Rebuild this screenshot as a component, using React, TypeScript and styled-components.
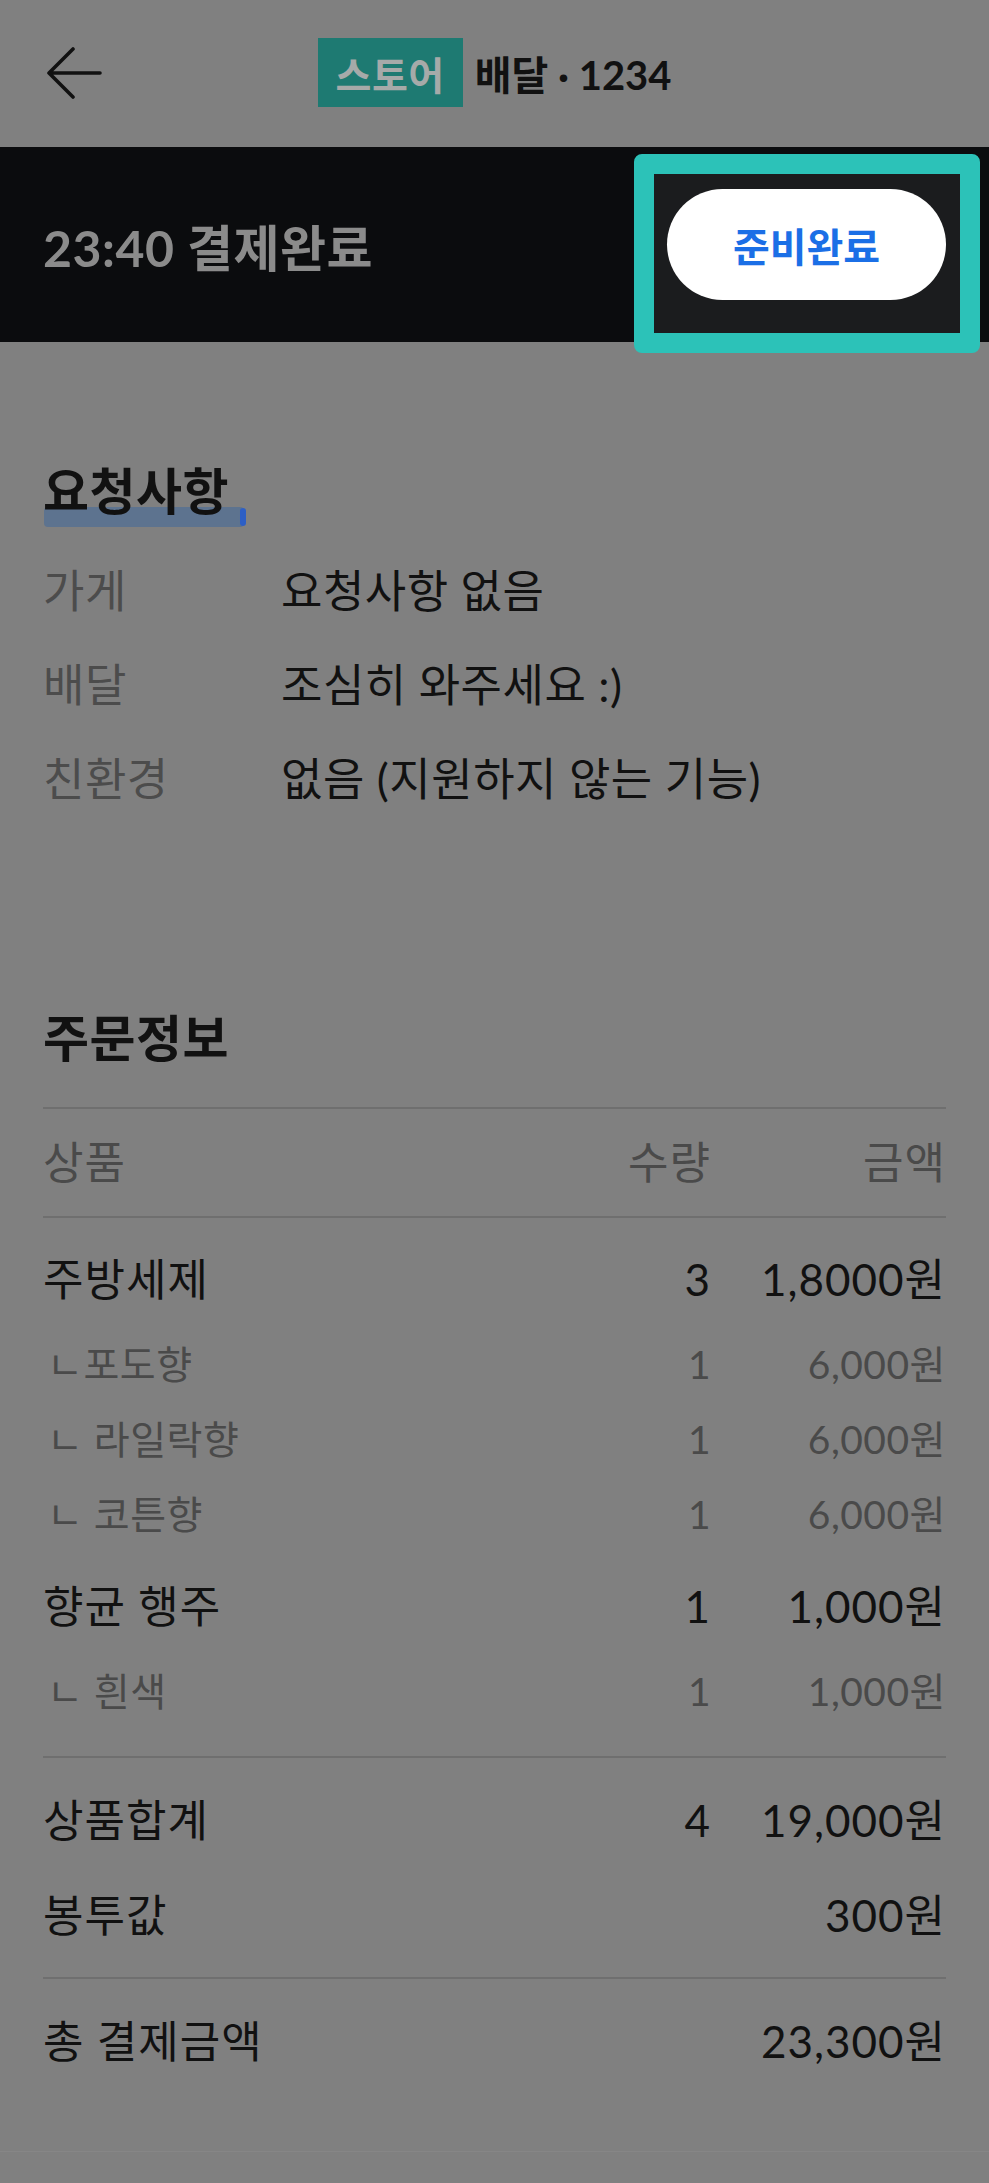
import React from 'react';
import styled, { createGlobalStyle } from 'styled-components';

const GlobalStyle = createGlobalStyle`
  html, body {
    margin: 0;
    padding: 0;
    background: #808080;
  }
  body {
    font-family: Lato, 'Noto Sans CJK KR', 'Noto Sans', sans-serif;
    color: #111111;
  }
`;

const Page = styled.div`
  width: 989px;
  min-height: 2183px;
  background: #808080;
  display: flex;
  flex-direction: column;
`;

const Header = styled.header`
  position: relative;
  height: 147px;
  display: flex;
  align-items: center;
  justify-content: center;
`;

const BackButton = styled.button`
  position: absolute;
  left: 44px;
  top: 45px;
  width: 60px;
  height: 56px;
  padding: 0;
  border: 0;
  background: none;
  display: flex;
  align-items: center;
  justify-content: center;
`;

const Title = styled.div`
  display: flex;
  align-items: center;
  gap: 12px;
  margin-top: -2px;
`;

const Badge = styled.span`
  height: 69px;
  padding: 0 18px;
  display: flex;
  align-items: center;
  background: #1e7a72;
  color: #a6aaa9;
  font-size: 39px;
  font-weight: 700;
  letter-spacing: 0.5px;
`;

const TitleText = styled.span`
  font-size: 40px;
  font-weight: 700;
  color: #111111;
`;

const StatusBand = styled.div`
  position: relative;
  height: 195px;
  background: #0b0c0e;
  padding: 0 43px;
  display: flex;
  align-items: center;
  justify-content: space-between;
`;

const StatusText = styled.span`
  font-size: 50px;
  font-weight: 700;
  color: #8b8b8b;
  letter-spacing: 0.5px;
`;

const Spotlight = styled.div`
  position: absolute;
  top: 7px;
  right: 9px;
  width: 306px;
  height: 159px;
  border: 20px solid #2cc2b8;
  border-radius: 8px;
  background: #1b1c1e;
`;

const ReadyButton = styled.button`
  position: relative;
  z-index: 1;
  width: 279px;
  height: 111px;
  border: 0;
  border-radius: 56px;
  background: #ffffff;
  color: #1b6fe6;
  font-family: 'Noto Sans CJK KR', sans-serif;
  font-size: 40px;
  font-weight: 700;
  display: flex;
  align-items: center;
  justify-content: center;
`;

const Section = styled.section<{ top: number }>`
  padding: ${({ top }) => top}px 43px 0;
`;

const SectionTitle = styled.h2`
  position: relative;
  display: inline-block;
  margin: 0;
  height: 60px;
  line-height: 60px;
  font-size: 50px;
  font-weight: 700;
  letter-spacing: 0.5px;
  color: #111111;
`;

const TitleLabel = styled.span`
  position: relative;
`;

const Highlighter = styled.span`
  position: absolute;
  left: 1px;
  top: 46px;
  width: 200px;
  height: 20px;
  border-radius: 4px;
  background: #587192;
  opacity: 0.85;
  &::after {
    content: '';
    position: absolute;
    right: -2px;
    top: 1px;
    width: 6px;
    height: 18px;
    border-radius: 3px;
    background: #1f5ad2;
  }
`;

const RequestList = styled.div`
  margin-top: 23px;
`;

const RequestRow = styled.div`
  display: grid;
  grid-template-columns: 238px 1fr;
  height: 94px;
  line-height: 94px;
  font-size: 45px;
  letter-spacing: 0.5px;
`;

const Label = styled.span`
  color: #4c4c4c;
`;

const OrderTable = styled.div`
  margin-top: 39px;
`;

const Divider = styled.div`
  height: 2px;
  background: #6f6f6f;
`;

const Row = styled.div<{ h: number; tone?: 'main' | 'sub' | 'head'; size?: number }>`
  display: grid;
  grid-template-columns: 1fr 120px 235px;
  height: ${({ h }) => h}px;
  line-height: ${({ h }) => h}px;
  font-size: ${({ size }) => size || 44}px;
  color: ${({ tone }) => (tone === 'sub' || tone === 'head' ? '#4a4a4a' : '#111111')};
  letter-spacing: ${({ tone }) => (tone === 'sub' ? '0.5px' : '1px')};
  & > span:not(:first-child) {
    text-align: right;
  }
`;

const Name = styled.span<{ sub?: boolean }>`
  padding-left: ${({ sub }) => (sub ? '4px' : '0')};
`;

const Group = styled.div<{ pad: string }>`
  padding: ${({ pad }) => pad};
`;

const Product = styled.div`
  & + & {
    margin-top: 7px;
  }
`;

const Footer = styled.div`
  margin-top: 62px;
  border-top: 1px solid #868686;
  flex: 1;
`;

const BackIcon = () => (
  <svg width="56" height="52" viewBox="0 0 56 52" fill="none">
    <path d="M54 26H5M27 2L3 26l24 24" stroke="#111" strokeWidth="3.6" strokeLinecap="round" strokeLinejoin="round" />
  </svg>
);

const products = [
  {
    name: '주방세제',
    qty: 3,
    price: '1,8000원',
    options: [
      { name: 'ㄴ포도향', qty: 1, price: '6,000원' },
      { name: 'ㄴ 라일락향', qty: 1, price: '6,000원' },
      { name: 'ㄴ 코튼향', qty: 1, price: '6,000원' },
    ],
  },
  {
    name: '향균 행주',
    qty: 1,
    price: '1,000원',
    options: [{ name: 'ㄴ 흰색', qty: 1, price: '1,000원' }],
  },
];

const requests = [
  { label: '가게', value: '요청사항 없음' },
  { label: '배달', value: '조심히 와주세요 :)' },
  { label: '친환경', value: '없음 (지원하지 않는 기능)' },
];

export default function App() {
  return (
    <>
      <GlobalStyle />
      <Page>
        <Header>
          <BackButton aria-label="뒤로">
            <BackIcon />
          </BackButton>
          <Title>
            <Badge>스토어</Badge>
            <TitleText>배달 · 1234</TitleText>
          </Title>
        </Header>

        <StatusBand>
          <StatusText>23:40 결제완료</StatusText>
          <Spotlight />
          <ReadyButton>준비완료</ReadyButton>
        </StatusBand>

        <Section top={119}>
          <SectionTitle>
            <Highlighter />
            <TitleLabel>요청사항</TitleLabel>
          </SectionTitle>
          <RequestList>
            {requests.map((r) => (
              <RequestRow key={r.label}>
                <Label>{r.label}</Label>
                <span>{r.value}</span>
              </RequestRow>
            ))}
          </RequestList>
        </Section>

        <Section top={182}>
          <SectionTitle>주문정보</SectionTitle>
          <OrderTable>
            <Divider />
            <Row h={107} tone="head">
              <span>상품</span>
              <span>수량</span>
              <span>금액</span>
            </Row>
            <Divider />
            <Group pad="14px 0 27px">
              {products.map((p) => (
                <Product key={p.name}>
                  <Row h={95} tone="main">
                    <Name>{p.name}</Name>
                    <span>{p.qty}</span>
                    <span>{p.price}</span>
                  </Row>
                  {p.options.map((o) => (
                    <Row key={o.name} h={75} tone="sub" size={39}>
                      <Name sub>{o.name}</Name>
                      <span>{o.qty}</span>
                      <span>{o.price}</span>
                    </Row>
                  ))}
                </Product>
              ))}
            </Group>
            <Divider />
            <Group pad="15px 0 14px">
              <Row h={95} tone="main">
                <span>상품합계</span>
                <span>4</span>
                <span>19,000원</span>
              </Row>
              <Row h={95} tone="main">
                <span>봉투값</span>
                <span></span>
                <span>300원</span>
              </Row>
            </Group>
            <Divider />
            <Group pad="15px 0 0">
              <Row h={95} tone="main">
                <span>총 결제금액</span>
                <span></span>
                <span>23,300원</span>
              </Row>
            </Group>
          </OrderTable>
        </Section>
        <Footer />
      </Page>
    </>
  );
}
